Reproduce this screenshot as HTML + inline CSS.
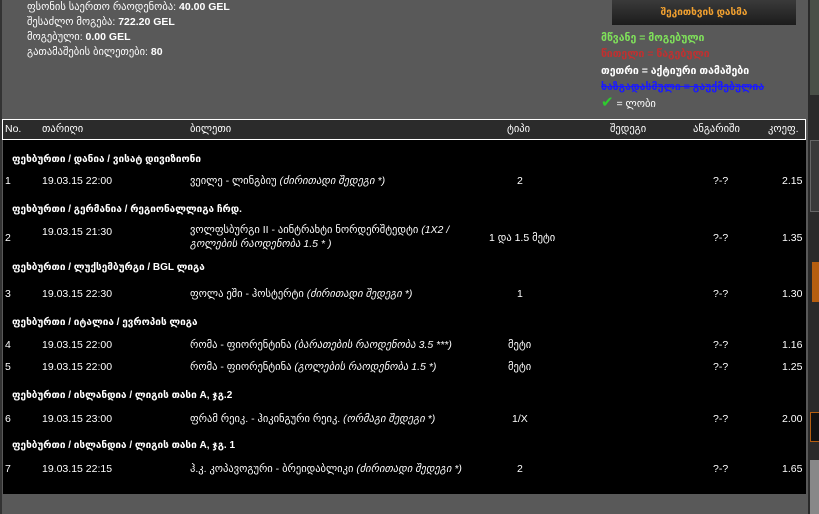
<!DOCTYPE html>
<html><head><meta charset="utf-8"><style>
body{margin:0;width:819px;height:514px;overflow:hidden;background:#595959;font-family:"Liberation Sans","DejaVu Sans",sans-serif;color:#fff;position:relative}
.a{position:absolute;white-space:nowrap;font-size:10.5px;line-height:12px}
.g{font-weight:bold;font-size:10px}
i{font-style:italic}
</style></head><body>
<div class="a" style="left:0;top:0;width:2px;height:514px;background:#333"></div>
<div class="a" style="left:808px;top:0;width:11px;height:514px;background:#2a2a2a"></div>
<div class="a" style="left:810px;top:0;width:9px;height:95px;background:#4a5048"></div>
<div class="a" style="left:810px;top:140px;width:9px;height:70px;background:#3a3a3a;border:1px solid #666"></div>
<div class="a" style="left:812px;top:262px;width:7px;height:40px;background:#b55e10"></div>
<div class="a" style="left:810px;top:412px;width:9px;height:28px;border:1px solid #b55e10;background:#111"></div>
<div class="a" style="left:810px;top:460px;width:9px;height:54px;background:#888"></div>

<div class="a" style="left:27px;top:1px">ფსონის საერთო რაოდენობა: <b>40.00 GEL</b></div>
<div class="a" style="left:27px;top:16px">შესაძლო მოგება: <b>722.20 GEL</b></div>
<div class="a" style="left:27px;top:31px">მოგებული: <b>0.00 GEL</b></div>
<div class="a" style="left:27px;top:46px">გათამაშების ბილეთები: <b>80</b></div>

<div class="a" style="left:612px;top:0;width:184px;height:25px;background:linear-gradient(#3a3a3a,#1c1c1c);color:#f0a030;text-align:center;line-height:26px;font-size:10px;font-weight:bold">შეკითხვის დასმა</div>
<div class="a" style="left:601px;top:32px;color:#7fe05a;font-weight:bold">მწვანე = მოგებული</div>
<div class="a" style="left:601px;top:48px;color:#c03030;font-weight:bold">წითელი = წაგებული</div>
<div class="a" style="left:601px;top:65px;color:#fff;font-weight:bold">თეთრი = აქტიური თამაშები</div>
<div class="a" style="left:601px;top:81px;color:#1a1aff;font-weight:bold;text-decoration:line-through">ხაზგადასმული = გაუქმებულია</div>
<div class="a" style="left:601px;top:97px"><span style="color:#2ecc2e;font-size:15px;font-weight:bold">✔</span> = ლობი</div>

<div class="a" style="left:2px;top:119px;width:802px;height:19px;background:#2b2b2b;border:1px solid #fff"></div>
<div class="a" style="left:3px;top:140px;width:803px;height:354px;background:#000"></div>

<div class="a" style="left:5px;top:123px">No.</div>
<div class="a" style="left:42px;top:123px">თარიღი</div>
<div class="a" style="left:190px;top:123px">ბილეთი</div>
<div class="a" style="left:507px;top:123px">ტიპი</div>
<div class="a" style="left:610px;top:123px">შედეგი</div>
<div class="a" style="left:693px;top:123px">ანგარიში</div>
<div class="a" style="left:768px;top:123px">კოეფ.</div>

<div class="a g" style="left:12px;top:154px">ფეხბურთი / დანია / ვისატ დივიზიონი</div>
<div class="a" style="left:5px;top:175px">1</div><div class="a" style="left:42px;top:175px">19.03.15 22:00</div>
<div class="a" style="left:190px;top:175px">ვეილე - ლინგბიუ <i>(ძირითადი შედეგი *)</i></div>
<div class="a" style="left:517px;top:175px">2</div><div class="a" style="left:713px;top:175px">?-?</div><div class="a" style="left:782px;top:175px">2.15</div>

<div class="a g" style="left:12px;top:204px">ფეხბურთი / გერმანია / რეგიონალლიგა ჩრდ.</div>
<div class="a" style="left:5px;top:232px">2</div><div class="a" style="left:42px;top:226px">19.03.15 21:30</div>
<div class="a" style="left:190px;top:224px">ვოლფსბურგი II - აინტრახტი ნორდერშტედტი <i>(1X2 /</i></div>
<div class="a" style="left:190px;top:238px"><i>გოლების რაოდენობა 1.5 * )</i></div>
<div class="a" style="left:489px;top:232px">1 და 1.5 მეტი</div><div class="a" style="left:713px;top:232px">?-?</div><div class="a" style="left:782px;top:232px">1.35</div>

<div class="a g" style="left:12px;top:262px">ფეხბურთი / ლუქსემბურგი / BGL ლიგა</div>
<div class="a" style="left:5px;top:288px">3</div><div class="a" style="left:42px;top:288px">19.03.15 22:30</div>
<div class="a" style="left:190px;top:288px">ფოლა ეში - ჰოსტერტი <i>(ძირითადი შედეგი *)</i></div>
<div class="a" style="left:517px;top:288px">1</div><div class="a" style="left:713px;top:288px">?-?</div><div class="a" style="left:782px;top:288px">1.30</div>

<div class="a g" style="left:12px;top:317px">ფეხბურთი / იტალია / ევროპის ლიგა</div>
<div class="a" style="left:5px;top:339px">4</div><div class="a" style="left:42px;top:339px">19.03.15 22:00</div>
<div class="a" style="left:190px;top:339px">რომა - ფიორენტინა <i>(ბარათების რაოდენობა 3.5 ***)</i></div>
<div class="a" style="left:508px;top:339px">მეტი</div><div class="a" style="left:713px;top:339px">?-?</div><div class="a" style="left:782px;top:339px">1.16</div>
<div class="a" style="left:5px;top:361px">5</div><div class="a" style="left:42px;top:361px">19.03.15 22:00</div>
<div class="a" style="left:190px;top:361px">რომა - ფიორენტინა <i>(გოლების რაოდენობა 1.5 *)</i></div>
<div class="a" style="left:508px;top:361px">მეტი</div><div class="a" style="left:713px;top:361px">?-?</div><div class="a" style="left:782px;top:361px">1.25</div>

<div class="a g" style="left:12px;top:390px">ფეხბურთი / ისლანდია / ლიგის თასი A, ჯგ.2</div>
<div class="a" style="left:5px;top:413px">6</div><div class="a" style="left:42px;top:413px">19.03.15 23:00</div>
<div class="a" style="left:190px;top:413px">ფრამ რეიკ. - ჰიკინგური რეიკ. <i>(ორმაგი შედეგი *)</i></div>
<div class="a" style="left:512px;top:413px">1/X</div><div class="a" style="left:713px;top:413px">?-?</div><div class="a" style="left:782px;top:413px">2.00</div>

<div class="a g" style="left:12px;top:440px">ფეხბურთი / ისლანდია / ლიგის თასი A, ჯგ. 1</div>
<div class="a" style="left:5px;top:463px">7</div><div class="a" style="left:42px;top:463px">19.03.15 22:15</div>
<div class="a" style="left:190px;top:463px">ჰ.კ. კოპავოგური - ბრეიდაბლიკი <i>(ძირითადი შედეგი *)</i></div>
<div class="a" style="left:517px;top:463px">2</div><div class="a" style="left:713px;top:463px">?-?</div><div class="a" style="left:782px;top:463px">1.65</div>
</body></html>
